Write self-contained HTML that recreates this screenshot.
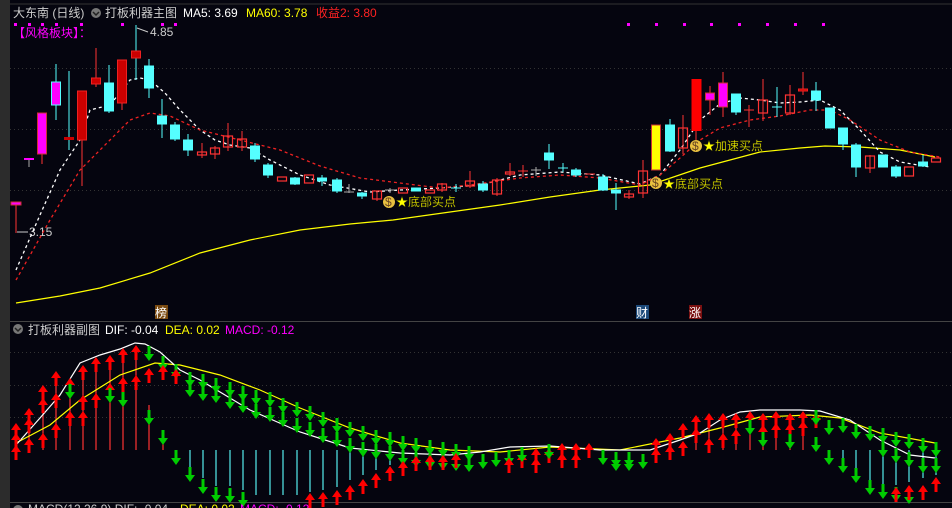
<!DOCTYPE html>
<html><head><meta charset="utf-8"><style>
html,body{margin:0;padding:0;background:#05050f;width:952px;height:508px;overflow:hidden}
svg{display:block}
text{font-family:"Liberation Sans","Noto Sans CJK SC",sans-serif;font-size:12px}
.r{fill:none;stroke:#f33;stroke-width:1.2}
.R{fill:#c00;stroke:#e22}
.c{fill:#5ff;stroke:#5ff}
.m{fill:#f0f;stroke:#c33}
.y{fill:#ff0;stroke:#c33}
.wr{stroke:#f33;stroke-width:1}
.wc{stroke:#5ff;stroke-width:1}
.wg{stroke:#aaa;stroke-width:1}
</style></head><body>
<svg width="952" height="508" viewBox="0 0 952 508" xmlns="http://www.w3.org/2000/svg">
<defs>
<path id="u" d="M-5,0 L0,-7 L5,0 L1.5,0 L1.5,8 L-1.5,8 L-1.5,0Z" fill="#f00"/>
<path id="d" d="M-5,0 L0,7 L5,0 L1.5,0 L1.5,-8 L-1.5,-8 L-1.5,0Z" fill="#0c0"/>
</defs>
<rect x="0" y="0" width="10" height="508" fill="#2c2c2c"/>
<line x1="10" y1="4" x2="952" y2="4" stroke="#333"/>
<line x1="10" y1="321.5" x2="952" y2="321.5" stroke="#444"/>
<line x1="10" y1="502.5" x2="952" y2="502.5" stroke="#444"/>
<g stroke="#333" stroke-dasharray="1,3">
<line x1="10" y1="68.5" x2="952" y2="68.5"/><line x1="10" y1="129.5" x2="952" y2="129.5"/><line x1="10" y1="190.5" x2="952" y2="190.5"/>
<line x1="10" y1="352.5" x2="952" y2="352.5"/><line x1="10" y1="385.5" x2="952" y2="385.5"/><line x1="10" y1="417.5" x2="952" y2="417.5"/>
</g>
<!-- header -->
<text x="13" y="17" fill="#ccc">大东南 (日线)</text>
<circle cx="96" cy="13" r="5" fill="#777"/><path d="M93,12 L96,15 L99,12" stroke="#222" fill="none" stroke-width="1.5"/>
<text x="105" y="17" fill="#ccc">打板利器主图</text>
<text x="183" y="17" fill="#fff">MA5: 3.69</text>
<text x="246" y="17" fill="#ff0">MA60: 3.78</text>
<text x="316" y="17" fill="#f22">收益2: 3.80</text>
<g fill="#f0f">
<rect x="14" y="23" width="3" height="3"/><rect x="28" y="23" width="3" height="3"/><rect x="41" y="23" width="3" height="3"/><rect x="55" y="23" width="3" height="3"/><rect x="80" y="23" width="3" height="3"/><rect x="121" y="23" width="3" height="3"/><rect x="161" y="23" width="3" height="3"/><rect x="174" y="23" width="3" height="3"/>
<rect x="627" y="23" width="3" height="3"/><rect x="655" y="23" width="3" height="3"/><rect x="683" y="23" width="3" height="3"/><rect x="710" y="23" width="3" height="3"/><rect x="738" y="23" width="3" height="3"/><rect x="766" y="23" width="3" height="3"/><rect x="794" y="23" width="3" height="3"/><rect x="822" y="23" width="3" height="3"/>
</g>
<text x="13" y="37" fill="#f0f">【风格板块】：</text>
<text x="150" y="36" fill="#ccc">4.85</text>
<path d="M137,28 L148,32" stroke="#ccc"/>
<text x="29" y="236" fill="#ccc">3.15</text>
<path d="M17,232 L28,232" stroke="#ccc"/>

<!-- MA lines -->
<polyline fill="none" stroke="#ff0" stroke-width="1.2" points="16,303 60,296 100,288 150,273 200,253 250,240 300,230 350,224 393,220 450,212 500,205 550,197 600,190 650,185 700,168 760,152 800,148 825,146 860,147 900,150 935,157"/>
<polyline fill="none" stroke="#fff" stroke-width="1.3" stroke-dasharray="3,3" points="16,270 40,215 60,170 80,140 90,110 110,105 130,80 140,78 150,80 165,93 180,110 200,130 215,140 230,145 250,148 270,160 300,175 330,185 370,192 400,190 440,188 480,185 520,175 560,172 600,175 640,184 660,175 680,150 700,120 720,104 740,98 760,100 780,103 800,102 820,100 840,110 860,130 880,152 900,162 930,167"/>
<polyline fill="none" stroke="#e22" stroke-width="1.3" stroke-dasharray="3,3" points="16,280 50,220 80,170 110,140 130,120 150,113 170,116 200,130 240,140 280,150 320,166 360,178 400,183 440,188 470,185 520,178 560,175 600,178 640,185 660,175 680,158 700,140 720,128 750,120 780,116 810,110 830,110 850,120 880,140 910,152 940,157"/>

<!-- candles -->
<g>
<line class="wr" x1="16" y1="202" x2="16" y2="233"/><rect class="m" x="11" y="202" width="10" height="3"/>
<line class="wg" x1="29" y1="159" x2="29" y2="167"/><rect fill="#f0f" x="24" y="158" width="10" height="2"/>
<line class="wr" x1="42" y1="113" x2="42" y2="164"/><rect class="m" x="37.5" y="113" width="9" height="41"/>
<line class="wc" x1="56" y1="64" x2="56" y2="120"/><rect class="m" x="51.5" y="82" width="9" height="23" style="stroke:#5ff"/>
<line class="wc" x1="69" y1="71" x2="69" y2="150"/><rect fill="#c00" x="64" y="137" width="10" height="3"/>
<line class="wr" x1="82" y1="91" x2="82" y2="186"/><rect class="R" x="77.5" y="91" width="9" height="49"/>
<line class="wr" x1="96" y1="48" x2="96" y2="87"/><rect class="R" x="91.5" y="78" width="9" height="6"/>
<line class="wc" x1="109" y1="65" x2="109" y2="113"/><rect class="c" x="104.5" y="83" width="9" height="28"/>
<line class="wr" x1="122" y1="60" x2="122" y2="110"/><rect class="R" x="117.5" y="60" width="9" height="43"/>
<line class="wc" x1="136" y1="25" x2="136" y2="80"/><rect class="R" x="131.5" y="51" width="9" height="7"/>
<line class="wc" x1="149" y1="59" x2="149" y2="98"/><rect class="c" x="144.5" y="66" width="9" height="22"/>
<line class="wc" x1="162" y1="99" x2="162" y2="138"/><rect class="c" x="157.5" y="116" width="9" height="8"/>
<line class="wc" x1="175" y1="122" x2="175" y2="141"/><rect class="c" x="170.5" y="125" width="9" height="14"/>
<line class="wc" x1="188" y1="134" x2="188" y2="156"/><rect class="c" x="183.5" y="140" width="9" height="10"/>
<line class="wr" x1="202" y1="143" x2="202" y2="158"/><rect class="r" x="197.5" y="152" width="9" height="3"/>
<line class="wr" x1="215" y1="146" x2="215" y2="159"/><rect class="r" x="210.5" y="148" width="9" height="6"/>
<line class="wr" x1="228" y1="123" x2="228" y2="151"/><rect class="r" x="223.5" y="136" width="9" height="11"/>
<line class="wr" x1="242" y1="131" x2="242" y2="151"/><rect class="r" x="237.5" y="139" width="9" height="8"/>
<line class="wc" x1="255" y1="143" x2="255" y2="162"/><rect class="c" x="250.5" y="146" width="9" height="13"/>
<line class="wc" x1="268" y1="163" x2="268" y2="178"/><rect class="c" x="263.5" y="165" width="9" height="10"/>
<rect class="r" x="277.5" y="177" width="9" height="4"/>
<line class="wc" x1="295" y1="177" x2="295" y2="185"/><rect class="c" x="290.5" y="178" width="9" height="6"/>
<rect class="r" x="304.5" y="175" width="9" height="8"/>
<line class="wc" x1="322" y1="175" x2="322" y2="186"/><rect class="c" x="317.5" y="178" width="9" height="3"/>
<line class="wc" x1="337" y1="178" x2="337" y2="193"/><rect class="c" x="332.5" y="180" width="9" height="11"/>
<line class="wg" x1="349" y1="184" x2="349" y2="193"/><line class="wg" x1="344" y1="192" x2="354" y2="192"/>
<line class="wc" x1="362" y1="192" x2="362" y2="199"/><rect class="c" x="357.5" y="193" width="9" height="3"/>
<line class="wr" x1="377" y1="191" x2="377" y2="201"/><rect class="r" x="372.5" y="191" width="9" height="8"/>
<line class="wg" x1="390" y1="188" x2="390" y2="193"/><line class="wg" x1="385" y1="190" x2="395" y2="190"/>
<rect class="r" x="398.5" y="188" width="9" height="5"/>
<rect class="c" x="411.5" y="188" width="9" height="3"/>
<rect class="r" x="425.5" y="190" width="9" height="3"/>
<line class="wr" x1="442" y1="183" x2="442" y2="192"/><rect class="r" x="437.5" y="184" width="9" height="6"/>
<line class="wc" x1="456" y1="184" x2="456" y2="192"/><line class="wc" x1="451" y1="188" x2="461" y2="188"/>
<line class="wr" x1="470" y1="171" x2="470" y2="188"/><rect class="r" x="465.5" y="181" width="9" height="5"/>
<line class="wc" x1="483" y1="181" x2="483" y2="192"/><rect class="c" x="478.5" y="184" width="9" height="6"/>
<line class="wr" x1="497" y1="178" x2="497" y2="196"/><rect class="r" x="492.5" y="180" width="9" height="14"/>
<line class="wr" x1="510" y1="163" x2="510" y2="176"/><rect class="r" x="505.5" y="172" width="9" height="2"/>
<line class="wr" x1="523" y1="165" x2="523" y2="177"/><line class="wr" x1="518" y1="171" x2="528" y2="171"/>
<line class="wg" x1="536" y1="167" x2="536" y2="176"/><line class="wg" x1="531" y1="170" x2="541" y2="170"/>
<line class="wc" x1="549" y1="144" x2="549" y2="169"/><rect class="c" x="544.5" y="153" width="9" height="7"/>
<line class="wc" x1="563" y1="163" x2="563" y2="172"/><line class="wc" x1="558" y1="168" x2="568" y2="168"/>
<line class="wc" x1="576" y1="168" x2="576" y2="177"/><rect class="c" x="571.5" y="170" width="9" height="5"/>
<line class="wr" x1="585" y1="174" x2="595" y2="174"/>
<line class="wc" x1="603" y1="174" x2="603" y2="191"/><rect class="c" x="598.5" y="177" width="9" height="13"/>
<line class="wc" x1="616" y1="183" x2="616" y2="210"/><rect class="c" x="611.5" y="190" width="9" height="3"/>
<line class="wr" x1="629" y1="190" x2="629" y2="199"/><rect class="r" x="624.5" y="194" width="9" height="3"/>
<line class="wr" x1="643" y1="160" x2="643" y2="198"/><rect class="r" x="638.5" y="171" width="9" height="22"/>
<rect class="y" x="651.5" y="125" width="9" height="45"/>
<line class="wc" x1="670" y1="119" x2="670" y2="152"/><rect class="c" x="665.5" y="125" width="9" height="26"/>
<line class="wr" x1="683" y1="115" x2="683" y2="154"/><rect class="r" x="678.5" y="128" width="9" height="20"/>
<line class="wr" x1="696" y1="79" x2="696" y2="140"/><rect x="691.5" y="79" width="10" height="52" fill="#f00"/>
<line class="wr" x1="710" y1="86" x2="710" y2="115"/><rect class="m" x="705.5" y="93" width="9" height="7"/>
<line class="wr" x1="723" y1="72" x2="723" y2="117"/><rect class="m" x="718.5" y="83" width="9" height="24"/>
<line class="wc" x1="736" y1="94" x2="736" y2="115"/><rect class="c" x="731.5" y="94" width="9" height="18"/>
<line class="wr" x1="749" y1="105" x2="749" y2="127"/><line class="wr" x1="744" y1="110" x2="754" y2="110"/>
<line class="wr" x1="763" y1="79" x2="763" y2="121"/><rect class="r" x="758.5" y="100" width="9" height="13"/>
<line class="wc" x1="777" y1="87" x2="777" y2="117"/><line class="wc" x1="772" y1="107" x2="782" y2="107"/>
<line class="wr" x1="790" y1="85" x2="790" y2="115"/><rect class="r" x="785.5" y="95" width="9" height="18"/>
<line class="wr" x1="803" y1="72" x2="803" y2="95"/><rect class="R" x="798.5" y="89" width="9" height="2"/>
<line class="wc" x1="816" y1="82" x2="816" y2="111"/><rect class="c" x="811.5" y="91" width="9" height="9"/>
<rect class="c" x="825.5" y="108" width="9" height="20"/>
<line class="wc" x1="843" y1="128" x2="843" y2="150"/><rect class="c" x="838.5" y="128" width="9" height="16"/>
<line class="wc" x1="856" y1="143" x2="856" y2="177"/><rect class="c" x="851.5" y="145" width="9" height="22"/>
<line class="wr" x1="870" y1="155" x2="870" y2="173"/><rect class="r" x="865.5" y="156" width="9" height="12"/>
<rect class="c" x="878.5" y="155" width="9" height="12"/>
<line class="wc" x1="896" y1="165" x2="896" y2="178"/><rect class="c" x="891.5" y="167" width="9" height="9"/>
<rect class="r" x="904.5" y="167" width="9" height="9"/>
<line class="wc" x1="923" y1="155" x2="923" y2="167"/><rect class="c" x="918.5" y="162" width="9" height="4"/>
<rect class="r" x="931.5" y="158" width="9" height="4"/>
</g>

<!-- signals -->
<g>
<circle cx="389" cy="202" r="6" fill="#e8c040"/><text x="385" y="206" font-size="8" fill="#642">$</text>
<text x="396" y="206" fill="#ff0" stroke="#330" stroke-width="0.3">★底部买点</text>
<circle cx="656" cy="183" r="6" fill="#e8c040"/><text x="652" y="187" font-size="8" fill="#642">$</text>
<text x="663" y="188" fill="#ff0" stroke="#330" stroke-width="0.3">★底部买点</text>
<circle cx="696" cy="146" r="6" fill="#e8c040"/><text x="692" y="150" font-size="8" fill="#642">$</text>
<text x="703" y="150" fill="#ff0" stroke="#330" stroke-width="0.3">★加速买点</text>
</g>
<rect x="155" y="305" width="13" height="14" fill="#7a4a10"/><text x="155" y="317" fill="#fff">榜</text>
<rect x="636" y="305" width="13" height="14" fill="#1d4a7a"/><text x="636" y="317" fill="#fff">财</text>
<rect x="689" y="305" width="13" height="14" fill="#7a1010"/><text x="689" y="317" fill="#fff">涨</text>

<!-- sub header -->
<circle cx="18" cy="329" r="5" fill="#777"/><path d="M15,328 L18,331 L21,328" stroke="#222" fill="none" stroke-width="1.5"/>
<text x="28" y="334" fill="#ccc">打板利器副图</text>
<text x="105" y="334" fill="#fff">DIF: -0.04</text>
<text x="165" y="334" fill="#ff0">DEA: 0.02</text>
<text x="225" y="334" fill="#f0f">MACD: -0.12</text>

<!-- histogram bars -->
<g stroke="#f33" stroke-width="1.2">
<line x1="16" y1="450" x2="16" y2="425"/><line x1="29" y1="450" x2="29" y2="410"/><line x1="43" y1="450" x2="43" y2="390"/><line x1="56" y1="450" x2="56" y2="378"/><line x1="70" y1="450" x2="70" y2="385"/><line x1="83" y1="450" x2="83" y2="372"/><line x1="96" y1="450" x2="96" y2="364"/><line x1="110" y1="450" x2="110" y2="362"/><line x1="123" y1="450" x2="123" y2="355"/><line x1="136" y1="450" x2="136" y2="352"/><line x1="149" y1="450" x2="149" y2="405"/><line x1="163" y1="450" x2="163" y2="430"/>
<line x1="696" y1="450" x2="696" y2="430"/><line x1="709" y1="450" x2="709" y2="420"/><line x1="723" y1="450" x2="723" y2="420"/><line x1="736" y1="450" x2="736" y2="418"/><line x1="750" y1="450" x2="750" y2="418"/><line x1="763" y1="450" x2="763" y2="420"/><line x1="776" y1="450" x2="776" y2="420"/><line x1="790" y1="450" x2="790" y2="420"/><line x1="803" y1="450" x2="803" y2="420"/>
</g>
<g stroke="#5ee" stroke-width="1.2">
<line x1="190" y1="450" x2="190" y2="468"/><line x1="203" y1="450" x2="203" y2="478"/><line x1="216" y1="450" x2="216" y2="486"/><line x1="230" y1="450" x2="230" y2="486"/><line x1="243" y1="450" x2="243" y2="490"/><line x1="256" y1="450" x2="256" y2="495"/><line x1="270" y1="450" x2="270" y2="495"/><line x1="283" y1="450" x2="283" y2="495"/><line x1="297" y1="450" x2="297" y2="495"/><line x1="310" y1="450" x2="310" y2="492"/><line x1="323" y1="450" x2="323" y2="490"/><line x1="337" y1="450" x2="337" y2="487"/><line x1="350" y1="450" x2="350" y2="480"/><line x1="363" y1="450" x2="363" y2="475"/><line x1="376" y1="450" x2="376" y2="470"/><line x1="390" y1="450" x2="390" y2="465"/><line x1="403" y1="450" x2="403" y2="460"/><line x1="416" y1="450" x2="416" y2="458"/>
<line x1="843" y1="450" x2="843" y2="462"/><line x1="856" y1="450" x2="856" y2="470"/><line x1="870" y1="450" x2="870" y2="480"/><line x1="883" y1="450" x2="883" y2="485"/><line x1="896" y1="450" x2="896" y2="485"/><line x1="909" y1="450" x2="909" y2="482"/><line x1="923" y1="450" x2="923" y2="478"/><line x1="936" y1="450" x2="936" y2="475"/>
</g>
<!-- DIF / DEA -->
<polyline fill="none" stroke="#ff0" stroke-width="1.2" points="16,443 50,425 80,400 120,375 155,363 180,365 220,375 260,390 300,408 350,428 400,443 450,450 500,452 550,447 620,450 680,438 720,428 760,417 810,415 840,418 880,433 935,443"/>
<polyline fill="none" stroke="#fff" stroke-width="1.2" points="16,445 40,418 60,395 80,363 100,355 120,349 135,343 145,344 160,352 180,370 200,380 250,410 300,432 350,448 400,453 450,455 480,452 510,447 550,446 600,450 650,450 680,440 700,433 720,420 740,412 760,410 800,410 820,411 850,420 880,440 910,455 935,458"/>
<!-- arrows -->
<g>
<use href="#u" x="16" y="430"/><use href="#u" x="16" y="440"/><use href="#u" x="16" y="452"/>
<use href="#u" x="29" y="415"/><use href="#u" x="29" y="425"/><use href="#u" x="29" y="445"/>
<use href="#u" x="43" y="392"/><use href="#u" x="43" y="405"/><use href="#u" x="43" y="440"/>
<use href="#u" x="56" y="378"/><use href="#u" x="56" y="400"/><use href="#u" x="56" y="430"/>
<use href="#u" x="70" y="385"/><use href="#u" x="70" y="418"/><use href="#d" x="70" y="392"/>
<use href="#u" x="83" y="372"/><use href="#u" x="83" y="402"/><use href="#u" x="83" y="418"/>
<use href="#u" x="96" y="364"/><use href="#u" x="96" y="400"/>
<use href="#u" x="110" y="362"/><use href="#u" x="110" y="390"/><use href="#d" x="110" y="396"/>
<use href="#u" x="123" y="355"/><use href="#u" x="123" y="384"/><use href="#d" x="123" y="400"/>
<use href="#u" x="136" y="352"/><use href="#u" x="136" y="382"/>
<use href="#d" x="149" y="354"/><use href="#u" x="149" y="375"/><use href="#d" x="149" y="418"/>
<use href="#d" x="163" y="364"/><use href="#u" x="163" y="372"/><use href="#d" x="163" y="438"/>
<use href="#d" x="176" y="372"/><use href="#u" x="176" y="376"/><use href="#d" x="176" y="458"/>
<use href="#d" x="190" y="380"/><use href="#d" x="190" y="390"/><use href="#d" x="190" y="475"/>
<use href="#d" x="203" y="382"/><use href="#d" x="203" y="394"/><use href="#d" x="203" y="487"/>
<use href="#d" x="216" y="386"/><use href="#d" x="216" y="396"/><use href="#d" x="216" y="495"/>
<use href="#d" x="230" y="390"/><use href="#d" x="230" y="402"/><use href="#d" x="230" y="496"/>
<use href="#d" x="243" y="394"/><use href="#d" x="243" y="406"/><use href="#d" x="243" y="500"/>
<use href="#d" x="256" y="398"/><use href="#d" x="256" y="412"/>
<use href="#d" x="270" y="400"/><use href="#d" x="270" y="415"/>
<use href="#d" x="283" y="406"/><use href="#d" x="283" y="420"/>
<use href="#d" x="297" y="410"/><use href="#d" x="297" y="426"/>
<use href="#d" x="310" y="414"/><use href="#d" x="310" y="430"/>
<use href="#d" x="323" y="420"/><use href="#d" x="323" y="436"/>
<use href="#d" x="337" y="426"/><use href="#d" x="337" y="440"/>
<use href="#d" x="350" y="430"/><use href="#d" x="350" y="446"/>
<use href="#d" x="363" y="434"/><use href="#d" x="363" y="450"/>
<use href="#d" x="376" y="438"/><use href="#d" x="376" y="452"/>
<use href="#d" x="390" y="440"/><use href="#d" x="390" y="454"/>
<use href="#d" x="403" y="444"/><use href="#d" x="403" y="458"/>
<use href="#d" x="416" y="446"/><use href="#d" x="416" y="460"/>
<use href="#d" x="430" y="448"/><use href="#d" x="430" y="462"/>
<use href="#d" x="443" y="450"/><use href="#d" x="443" y="463"/>
<use href="#d" x="456" y="452"/><use href="#d" x="456" y="464"/>
<use href="#d" x="469" y="454"/><use href="#d" x="469" y="465"/>
<use href="#u" x="310" y="500"/><use href="#u" x="323" y="499"/><use href="#u" x="337" y="497"/><use href="#u" x="350" y="492"/><use href="#u" x="363" y="486"/><use href="#u" x="376" y="480"/><use href="#u" x="390" y="473"/><use href="#u" x="403" y="468"/><use href="#u" x="416" y="463"/><use href="#u" x="430" y="462"/><use href="#u" x="443" y="462"/><use href="#u" x="456" y="460"/>
<use href="#d" x="483" y="462"/><use href="#d" x="496" y="460"/>
<use href="#d" x="509" y="458"/><use href="#u" x="509" y="465"/>
<use href="#u" x="522" y="460"/><use href="#d" x="522" y="455"/>
<use href="#u" x="536" y="455"/><use href="#u" x="536" y="465"/>
<use href="#u" x="549" y="455"/><use href="#d" x="549" y="452"/>
<use href="#u" x="562" y="450"/><use href="#u" x="562" y="460"/>
<use href="#u" x="576" y="450"/><use href="#u" x="576" y="460"/>
<use href="#u" x="589" y="450"/>
<use href="#d" x="603" y="458"/><use href="#d" x="616" y="460"/><use href="#d" x="616" y="464"/><use href="#d" x="629" y="460"/><use href="#d" x="629" y="464"/><use href="#d" x="643" y="462"/>
<use href="#u" x="656" y="445"/><use href="#u" x="656" y="455"/>
<use href="#u" x="670" y="440"/><use href="#u" x="670" y="452"/>
<use href="#u" x="683" y="430"/><use href="#u" x="683" y="448"/>
<use href="#u" x="696" y="422"/><use href="#u" x="696" y="435"/>
<use href="#u" x="709" y="420"/><use href="#u" x="709" y="445"/>
<use href="#u" x="723" y="420"/><use href="#u" x="723" y="440"/>
<use href="#u" x="736" y="420"/><use href="#u" x="736" y="436"/>
<use href="#u" x="750" y="418"/><use href="#d" x="750" y="428"/>
<use href="#u" x="763" y="420"/><use href="#u" x="763" y="432"/><use href="#d" x="763" y="440"/>
<use href="#u" x="776" y="418"/><use href="#u" x="776" y="430"/>
<use href="#u" x="790" y="420"/><use href="#u" x="790" y="430"/><use href="#d" x="790" y="442"/>
<use href="#u" x="803" y="418"/><use href="#u" x="803" y="428"/>
<use href="#u" x="816" y="420"/><use href="#d" x="816" y="418"/><use href="#d" x="816" y="445"/>
<use href="#d" x="829" y="428"/><use href="#d" x="829" y="458"/>
<use href="#d" x="843" y="426"/><use href="#d" x="843" y="466"/>
<use href="#d" x="856" y="432"/><use href="#d" x="856" y="476"/>
<use href="#d" x="870" y="434"/><use href="#d" x="870" y="488"/>
<use href="#d" x="883" y="436"/><use href="#d" x="883" y="450"/><use href="#d" x="883" y="492"/>
<use href="#d" x="896" y="440"/><use href="#d" x="896" y="456"/><use href="#d" x="896" y="495"/>
<use href="#d" x="909" y="442"/><use href="#d" x="909" y="460"/><use href="#d" x="909" y="497"/>
<use href="#d" x="923" y="446"/><use href="#d" x="923" y="466"/><use href="#u" x="923" y="492"/>
<use href="#d" x="936" y="450"/><use href="#d" x="936" y="466"/><use href="#u" x="936" y="484"/>
<use href="#u" x="896" y="494"/><use href="#u" x="909" y="492"/>
</g>
<!-- bottom cut header -->
<circle cx="18" cy="510" r="5" fill="#777"/>
<text x="28" y="513" fill="#ccc">MACD(12,26,9)  DIF: -0.04</text>
<text x="180" y="513" fill="#ff0">DEA: 0.02</text>
<text x="240" y="513" fill="#f0f">MACD: -0.12</text>
</svg>
</body></html>
